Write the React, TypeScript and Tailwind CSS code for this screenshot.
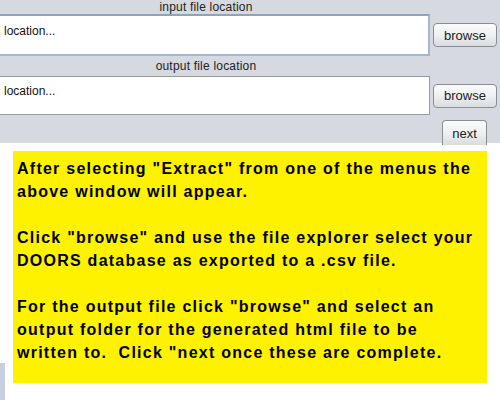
const lines = [
  'After selecting "Extract" from one of the menus the',
  "above window will appear.",
  "",
  'Click "browse" and use the file explorer select your',
  "DOORS database as exported to a .csv file.",
  "",
  'For the output file click "browse" and select an',
  "output folder for the generated html file to be",
  'written to.\u00a0 Click "next once these are complete.',
];

function Button({ label, className }: { label: string; className: string }) {
  return (
    <button
      className={`flex items-center justify-center rounded-[4px] border border-[#8a8d92] bg-gradient-to-b from-[#fbfbfb] via-[#eef0f2] to-[#d9dce0] text-[13px] leading-none text-[#222] ${className}`}
    >
      {label}
    </button>
  );
}

export default function App() {
  return (
    <div className="h-[400px] w-[500px] overflow-hidden bg-white font-['Liberation_Sans',Arial,sans-serif]">
      <div className="h-[143px] bg-[#d6d9df]">
        <div className="h-[14px] w-[412px] text-center text-[12px] leading-[14px] tracking-[0.2px] text-[#222]">
          input file location
        </div>
        <div className="flex items-center">
          <div className="flex h-[42px] w-[430px] items-start border-2 border-l-0 border-[#a3b8d0] border-t-[#8fa3bd] bg-white pl-[4px] pt-[6px] text-[12px] text-[#111]">
            location...
          </div>
          <Button label="browse" className="ml-[3px] h-[24px] w-[64px]" />
        </div>
        <div className="flex h-[20px] w-[412px] items-end justify-center pb-[3px] text-[12px] leading-[14px] tracking-[0.2px] text-[#222]">
          output file location
        </div>
        <div className="flex items-center">
          <div className="flex h-[39px] w-[430px] items-start border border-l-0 border-[#9a9a9a] bg-white pl-[4px] pt-[5px] text-[12px] text-[#111]">
            location...
          </div>
          <Button label="browse" className="ml-[3px] h-[24px] w-[64px]" />
        </div>
        <div className="flex justify-end pr-[13px] pt-[5px]">
          <Button label="next" className="h-[25px] w-[45px] rounded-b-none border-b-0" />
        </div>
      </div>
      <div className="flex pt-[8px]">
        <div className="w-[5px]">
          <div className="mt-[212px] h-[40px] bg-[#c6cfdf]" />
        </div>
        <div className="ml-[8px] h-[232px] w-[474px] bg-[#fff200] pl-[4px] pt-[6px] text-[16px] font-bold leading-[23px] tracking-[1.25px] text-black">
          {lines.map((line, i) => (
            <div key={i} className="h-[23px] whitespace-pre">
              {line}
            </div>
          ))}
        </div>
      </div>
    </div>
  );
}
